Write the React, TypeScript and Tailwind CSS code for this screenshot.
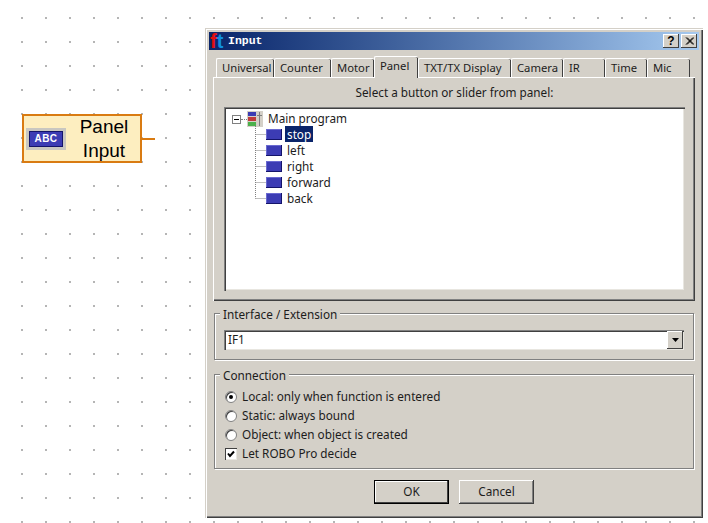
const ui = "font-['Noto_Sans','DejaVu_Sans',sans-serif] text-[11.75px] text-[#1c1c1c]";

const tabs = [
  { label: "Universal", w: "w-[58px]" },
  { label: "Counter", w: "w-[57px]" },
  { label: "Motor", w: "w-[43px]" },
  { label: "Panel", w: "w-[44px]", active: true },
  { label: "TXT/TX Display", w: "w-[93px]" },
  { label: "Camera", w: "w-[52px]" },
  { label: "IR", w: "w-[42px]" },
  { label: "Time", w: "w-[42px]" },
  { label: "Mic", w: "w-[43px]" },
];

const treeItems = ["stop", "left", "right", "forward", "back"];

const connection = [
  { label: "Local: only when function is entered", checked: true },
  { label: "Static: always bound", checked: false },
  { label: "Object: when object is created", checked: false },
];

function PanelNode() {
  return (
    <div className="absolute left-[22px] top-[114px] flex items-center">
      <div className="flex h-[49px] w-[120px] items-center border-2 border-[#d97b12] bg-[#fdeec0] pl-[2px]">
        <div className="flex h-[22px] w-[40px] items-center justify-center bg-[#c9c7c0]">
          <div className="flex h-[16px] w-[34px] items-center justify-center border border-[#14146a] bg-[#3c3cb4] font-['Liberation_Sans',sans-serif] text-[10px] font-bold tracking-[0.4px] text-white">
            ABC
          </div>
        </div>
        <div className="ml-[13px] w-[50px] text-center font-['Liberation_Sans',sans-serif] text-[19px] leading-[24px] text-black">
          <div>Panel</div>
          <div>Input</div>
        </div>
      </div>
      <div className="h-[2px] w-[13px] bg-[#d97b12]" />
    </div>
  );
}

function TitleBar() {
  return (
    <div className="flex h-[18px] items-center bg-gradient-to-r from-[#0a246a] to-[#a6caf0] pl-[1px] pr-[2px]">
      <span className="w-[18px] font-['Liberation_Sans',sans-serif] text-[20px] leading-[18px] font-bold">
        <span className="text-[#e01010]">f</span>
        <span className="text-[#1090e0]">t</span>
      </span>
      <span className="font-['Liberation_Mono',monospace] text-[11.5px] font-bold text-white">
        Input
      </span>
      <div className="ml-auto flex gap-[2px]">
        <TitleButton>
          <span className="font-['Liberation_Sans',sans-serif] text-[12px] leading-none font-bold text-black">?</span>
        </TitleButton>
        <TitleButton>
          <svg width="9" height="8" viewBox="0 0 9 8">
            <path d="M1 0.5L8 7.5M2 0.5L9 7.5M8 0.5L1 7.5M9 0.5L2 7.5" stroke="#000" strokeWidth="1" fill="none" />
          </svg>
        </TitleButton>
      </div>
    </div>
  );
}

function TitleButton({ children }: { children: React.ReactNode }) {
  return (
    <div className="flex h-[14px] w-[16px] items-center justify-center bg-[#d4d0c8] shadow-[inset_-1px_-1px_0_#404040,inset_1px_1px_0_#fff]">
      {children}
    </div>
  );
}

function TabStrip() {
  return (
    <div className="relative z-10 flex h-[21px] items-end pl-[3px] text-[11.25px]">
      {tabs.map((t) => (
        <div
          key={t.label}
          className={`${t.w} shrink-0 rounded-t-[2px] border-l border-t border-white bg-[#d4d0c8] pl-[5px] shadow-[inset_-1px_0_0_#404040] ${
            t.active
              ? "relative z-10 -mb-[1px] h-[22px] pt-[1px]"
              : "h-[19px] leading-[18px]"
          }`}
        >
          {t.label}
        </div>
      ))}
    </div>
  );
}

function MainProgramIcon() {
  return (
    <svg width="16" height="16" viewBox="0 0 16 16" className="shrink-0">
      <rect width="16" height="16" fill="#d4d0c8" />
      <rect x="1" y="1" width="8" height="4" fill="#3c3cb4" />
      <rect x="1" y="6" width="8" height="4" fill="#c03c3c" />
      <rect x="1" y="11" width="8" height="4" fill="#4cb04c" />
      <path d="M10 4.5H15M12.5 1V15" stroke="#808080" fill="none" />
    </svg>
  );
}

function TreeRow({ label, last, selected }: { label: string; last: boolean; selected: boolean }) {
  return (
    <div className="flex h-[16px] items-center pl-[31px]">
      <svg width="11" height="16" viewBox="0 0 11 16" className="shrink-0">
        <path
          d={last ? "M0.5 0V8.5M0.5 8.5H11" : "M0.5 0V16M0.5 8.5H11"}
          stroke="#808080"
          strokeDasharray="1 1"
          fill="none"
        />
      </svg>
      <div className="h-[11px] w-[16px] shrink-0 border-b border-r border-[#14146a] bg-[#3c3cb4] shadow-[inset_1px_1px_0_#6a6ad0]" />
      <div className={`ml-[3px] px-[2px] leading-[16px] ${selected ? "bg-[#0a246a] text-white" : ""}`}>
        {label}
      </div>
    </div>
  );
}

function ProgramTree() {
  return (
    <div className="mx-[10px] mt-[7px] h-[184px] bg-white pt-[4px] shadow-[inset_1px_1px_0_#808080,inset_2px_2px_0_#404040,inset_-1px_-1px_0_#d4d0c8,inset_-2px_-2px_0_#e8e6e0]">
      <div className="flex h-[16px] items-center pl-[8px]">
        <div className="flex h-[9px] w-[9px] shrink-0 items-center justify-center border border-[#808080] bg-white">
          <div className="h-[1px] w-[5px] bg-black" />
        </div>
        <div className="h-0 w-[6px] shrink-0 border-t border-dotted border-[#808080]" />
        <MainProgramIcon />
        <span className="ml-[5px]">Main program</span>
      </div>
      <div className="-mt-[1px]">
        {treeItems.map((item, i) => (
          <TreeRow key={item} label={item} last={i === treeItems.length - 1} selected={i === 0} />
        ))}
      </div>
    </div>
  );
}

function GroupBox({ title, className, children }: { title: string; className: string; children: React.ReactNode }) {
  return (
    <div className={`relative mx-[1px] border border-[#808080] shadow-[inset_1px_1px_0_#fff,1px_1px_0_#fff] ${className}`}>
      <span className="absolute -top-[8px] left-[5px] bg-[#d4d0c8] px-[3px] leading-[16px]">{title}</span>
      {children}
    </div>
  );
}

function ComboBox() {
  return (
    <div className="mx-[9px] flex h-[20px] items-center justify-between bg-white pl-[4px] shadow-[inset_1px_1px_0_#808080,inset_2px_2px_0_#404040,inset_-1px_-1px_0_#e8e6e0]">
      <span>IF1</span>
      <div className="mr-[1px] flex h-[18px] w-[16px] items-center justify-center bg-[#d4d0c8] shadow-[inset_-1px_-1px_0_#404040,inset_1px_1px_0_#fff]">
        <svg width="7" height="4" viewBox="0 0 7 4">
          <path d="M0 0H7L3.5 4Z" fill="#000" />
        </svg>
      </div>
    </div>
  );
}

function Radio({ checked }: { checked: boolean }) {
  return (
    <div className="flex h-[12px] w-[12px] shrink-0 items-center justify-center rounded-full border border-[#808080] bg-white shadow-[inset_1px_1px_0_#404040]">
      {checked && <div className="h-[4px] w-[4px] rounded-full bg-black" />}
    </div>
  );
}

function DialogButton({ label, primary }: { label: string; primary?: boolean }) {
  return (
    <div
      className={`flex h-[24px] w-[75px] items-center justify-center bg-[#d4d0c8] ${
        primary
          ? "border border-black shadow-[inset_-1px_-1px_0_#404040,inset_1px_1px_0_#fff]"
          : "shadow-[inset_-1px_-1px_0_#404040,inset_1px_1px_0_#fff,inset_-2px_-2px_0_#808080]"
      }`}
    >
      {label}
    </div>
  );
}

function InputDialog() {
  return (
    <div className={`absolute left-[205px] top-[28px] h-[490px] w-[498px] bg-[#d4d0c8] p-[4px] shadow-[inset_1px_1px_0_#d4d0c8,inset_2px_2px_0_#fff,inset_-1px_-1px_0_#404040,inset_-2px_-2px_0_#808080] ${ui}`}>
      <TitleBar />
      <div className="px-[4px] pt-[6px]">
        <TabStrip />
        <div className="h-[224px] border-l border-t border-white shadow-[inset_-1px_-1px_0_#404040,inset_-2px_-2px_0_#808080,inset_-3px_-3px_0_#d4d0c8]">
          <div className="pt-[6px] text-center leading-[16px]">Select a button or slider from panel:</div>
          <ProgramTree />
        </div>
        <GroupBox title="Interface / Extension" className="mt-[12px] h-[47px] pt-[16px]">
          <ComboBox />
        </GroupBox>
        <GroupBox title="Connection" className="mt-[14px] h-[95px] pl-[10px] pt-[12px]">
          {connection.map((c) => (
            <div key={c.label} className="flex h-[19px] items-center gap-[5px]">
              <Radio checked={c.checked} />
              <span>{c.label}</span>
            </div>
          ))}
          <div className="flex h-[19px] items-center gap-[5px]">
            <div className="flex h-[12px] w-[12px] shrink-0 items-center justify-center bg-white shadow-[inset_1px_1px_0_#404040,inset_-1px_-1px_0_#e8e6e0]">
              <svg width="8" height="8" viewBox="0 0 8 8">
                <path d="M1 3.5L3 6L7 1.5" stroke="#000" strokeWidth="2" fill="none" />
              </svg>
            </div>
            <span>Let ROBO Pro decide</span>
          </div>
        </GroupBox>
        <div className="mt-[11px] flex gap-[10px] pl-[161px]">
          <DialogButton label="OK" primary />
          <DialogButton label="Cancel" />
        </div>
      </div>
    </div>
  );
}

export default function App() {
  return (
    <div className="relative h-[523px] w-[708px] overflow-hidden bg-white bg-[radial-gradient(circle,#8c8c8c_0.6px,transparent_0.9px)] bg-[length:24px_24px] bg-[position:10px_6px]">
      <PanelNode />
      <InputDialog />
    </div>
  );
}
